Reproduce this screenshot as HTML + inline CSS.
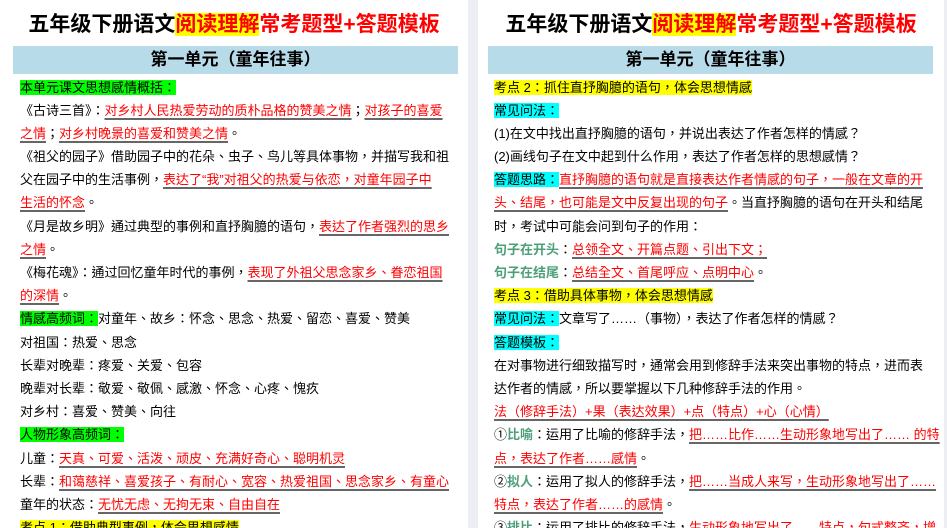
<!DOCTYPE html>
<html><head><meta charset="utf-8"><style>
*{margin:0;padding:0;box-sizing:border-box}
body{width:947px;height:528px;overflow:hidden;background:#eceef3;font-family:"Liberation Sans","Noto Sans CJK TC",sans-serif;position:relative}
.pg{position:absolute;top:0;height:528px;background:#fff;overflow:hidden}
.t{position:absolute;top:10px;left:0;right:0;text-align:center;font-size:21px;font-weight:bold;line-height:30px;color:#000;white-space:nowrap}
.t .y{background:#ffff00;color:#ff0000}.t .r{color:#ff0000}
.b{position:absolute;top:46px;height:28px;background:#b7dbe8;text-align:center;font-size:17px;font-weight:bold;line-height:28px}
.c{position:absolute;top:75.5px;font-size:13px;line-height:23.2px;color:#000;white-space:nowrap}
.c div{height:23.2px}
.r{color:#f00}
.u{color:#f00;text-decoration:underline;text-decoration-color:#666;text-decoration-thickness:1.5px;text-underline-offset:3px}
.g{background:#00ff00}.y{background:#ffff00}.cy{background:#00ffff}
.tl{color:#4d9f78;font-weight:bold}
</style></head><body>
<div class="pg" style="left:0;width:468px">
<div class="t">五年级下册语文<span class="y">阅读理解</span><span class="r">常考题型+答题模板</span></div>
<div class="b" style="left:13px;width:445px">第一单元（童年往事）</div>
<div class="c" style="left:20px">
<div><span class="g">本单元课文思想感情概括：</span></div>
<div>《古诗三首》：<span class="u">对乡村人民热爱劳动的质朴品格的赞美之情</span>；<span class="u">对孩子的喜爱</span></div>
<div><span class="u">之情</span>；<span class="u">对乡村晚景的喜爱和赞美之情</span>。</div>
<div>《祖父的园子》借助园子中的花朵、虫子、鸟儿等具体事物，并描写我和祖</div>
<div>父在园子中的生活事例，<span class="u">表达了“我”对祖父的热爱与依恋，对童年园子中</span></div>
<div><span class="u">生活的怀念</span>。</div>
<div>《月是故乡明》通过典型的事例和直抒胸臆的语句，<span class="u">表达了作者强烈的思乡</span></div>
<div><span class="u">之情</span>。</div>
<div>《梅花魂》：通过回忆童年时代的事例，<span class="u">表现了外祖父思念家乡、眷恋祖国</span></div>
<div><span class="u">的深情</span>。</div>
<div><span class="g">情感高频词：</span>对童年、故乡：怀念、思念、热爱、留恋、喜爱、赞美</div>
<div>对祖国：热爱、思念</div>
<div>长辈对晚辈：疼爱、关爱、包容</div>
<div>晚辈对长辈：敬爱、敬佩、感激、怀念、心疼、愧疚</div>
<div>对乡村：喜爱、赞美、向往</div>
<div><span class="g">人物形象高频词：</span></div>
<div>儿童：<span class="u">天真、可爱、活泼、顽皮、充满好奇心、聪明机灵</span></div>
<div>长辈：<span class="u">和蔼慈祥、喜爱孩子、有耐心、宽容、热爱祖国、思念家乡、有童心</span></div>
<div>童年的状态：<span class="u">无忧无虑、无拘无束、自由自在</span></div>
<div><span class="y">考点 1：借助典型事例，体会思想感情</span></div>
</div>
</div>
<div class="pg" style="left:478px;width:466px">
<div class="t">五年级下册语文<span class="y">阅读理解</span><span class="r">常考题型+答题模板</span></div>
<div class="b" style="left:10px;width:445px">第一单元（童年往事）</div>
<div class="c" style="left:16px">
<div><span class="y">考点 2：抓住直抒胸臆的语句，体会思想情感</span></div>
<div><span class="cy">常见问法：</span></div>
<div>(1)在文中找出直抒胸臆的语句，并说出表达了作者怎样的情感？</div>
<div>(2)画线句子在文中起到什么作用，表达了作者怎样的思想感情？</div>
<div><span class="cy">答题思路：</span><span class="u">直抒胸臆的语句就是直接表达作者情感的句子，一般在文章的开</span></div>
<div><span class="u">头、结尾，也可能是文中反复出现的句子</span>。当直抒胸臆的语句在开头和结尾</div>
<div>时，考试中可能会问到句子的作用：</div>
<div><span class="tl">句子在开头</span>：<span class="u">总领全文、开篇点题、引出下文；</span></div>
<div><span class="tl">句子在结尾</span>：<span class="u">总结全文、首尾呼应、点明中心</span>。</div>
<div><span class="y">考点 3：借助具体事物，体会思想情感</span></div>
<div><span class="cy">常见问法：</span>文章写了……（事物），表达了作者怎样的情感？</div>
<div><span class="cy">答题模板：</span></div>
<div>在对事物进行细致描写时，通常会用到修辞手法来突出事物的特点，进而表</div>
<div>达作者的情感，所以要掌握以下几种修辞手法的作用。</div>
<div><span class="u">法（修辞手法）+果（表达效果）+点（特点）+心（心情）</span></div>
<div>①<span class="tl">比喻</span>：运用了比喻的修辞手法，<span class="u">把……比作……生动形象地写出了…… 的特</span></div>
<div><span class="u">点，表达了作者……感情</span>。</div>
<div>②<span class="tl">拟人</span>：运用了拟人的修辞手法，<span class="u">把……当成人来写，生动形象地写出了……</span></div>
<div><span class="u">特点，表达了作者……的感情</span>。</div>
<div>③<span class="tl">排比</span>：运用了排比的修辞手法，<span class="u">生动形象地写出了……特点，句式整齐，增</span></div>
</div>
</div>
</body></html>
